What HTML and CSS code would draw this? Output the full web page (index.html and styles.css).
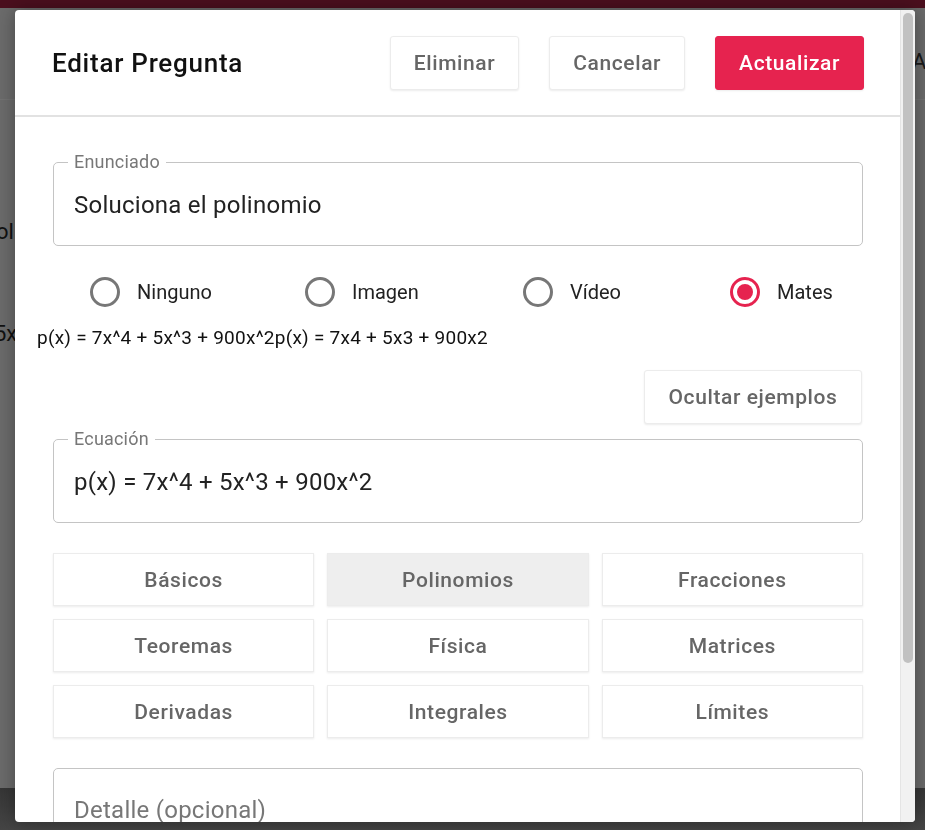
FILE: index.html
```html
<!DOCTYPE html>
<html lang="es">
<head>
    <meta charset="UTF-8">
    <meta name="viewport" content="width=device-width, initial-scale=1.0">
    <title>Editar Pregunta</title>
    <link rel="stylesheet" href="styles.css">
</head>
<body>
    <div class="page">
        <div class="page-top"></div>
        <div class="page-bar">Actualizar</div>
        <p class="page-line first">olinomio</p>
        <p class="page-line second">5x^3 + 900x^2</p>
        <div class="page-footer"></div>
    </div>

    <div class="modal">
        <div class="modal-content">
            <header class="modal-header">
                <h1>Editar Pregunta</h1>
                <div class="actions">
                    <button class="btn">Eliminar</button>
                    <button class="btn">Cancelar</button>
                    <button class="btn primary">Actualizar</button>
                </div>
            </header>

            <div class="modal-body">
                <fieldset class="field">
                    <legend>Enunciado</legend>
                    <div class="field-value">Soluciona el polinomio</div>
                </fieldset>

                <div class="media-options">
                    <label class="radio"><span class="radio-circle"></span>Ninguno</label>
                    <label class="radio"><span class="radio-circle"></span>Imagen</label>
                    <label class="radio"><span class="radio-circle"></span>Vídeo</label>
                    <label class="radio"><span class="radio-circle checked"></span>Mates</label>
                </div>

                <p class="preview">p(x) = 7x^4 + 5x^3 + 900x^2p(x) = 7x4 + 5x3 + 900x2</p>

                <div class="examples-row">
                    <button class="btn">Ocultar ejemplos</button>
                </div>

                <fieldset class="field">
                    <legend>Ecuación</legend>
                    <div class="field-value">p(x) = 7x^4 + 5x^3 + 900x^2</div>
                </fieldset>

                <div class="categories">
                    <button class="btn cat">Básicos</button>
                    <button class="btn cat active">Polinomios</button>
                    <button class="btn cat">Fracciones</button>
                    <button class="btn cat">Teoremas</button>
                    <button class="btn cat">Física</button>
                    <button class="btn cat">Matrices</button>
                    <button class="btn cat">Derivadas</button>
                    <button class="btn cat">Integrales</button>
                    <button class="btn cat">Límites</button>
                </div>

                <fieldset class="field detail">
                    <div class="field-value placeholder">Detalle (opcional)</div>
                </fieldset>
            </div>
        </div>
        <div class="scrollbar"><div class="scrollbar-thumb"></div></div>
    </div>
</body>
</html>
```

FILE: styles.css
```css
* {
    box-sizing: border-box;
}

body {
    margin: 0;
    font-family: Roboto, "Liberation Sans", Arial, sans-serif;
    background: #6b6b6b;
    height: 100vh;
    overflow: hidden;
}

/* page behind the dialog (already darkened) */
.page {
    height: 100vh;
    display: flex;
    flex-direction: column;
    color: #111;
}

.page-top {
    height: 8px;
    background: #4b0f1e;
}

.page-bar {
    height: 92px;
    padding-left: 912px;
    padding-top: 41px;
    font-size: 22px;
    color: #1a1a1a;
    white-space: nowrap;
    overflow: hidden;
    border-bottom: 1px solid #727272;
}

.page-line {
    margin: 0 0 0 -4px;
    font-size: 22px;
    white-space: nowrap;
    overflow: hidden;
}

.page-line.first {
    margin-top: 119px;
}

.page-line.second {
    margin-top: 77px;
    margin-left: -6px;
}

.page-footer {
    margin-top: auto;
    height: 42px;
    background: linear-gradient(#363636, #454545);
}

/* dialog */
.modal {
    position: fixed;
    top: 10px;
    left: 15px;
    width: 900px;
    height: 812px;
    display: flex;
    background: #fff;
    border-radius: 4px;
    overflow: hidden;
    box-shadow: 0 0 18px rgba(0, 0, 0, 0.35);
}

.modal-content {
    flex: 1;
    overflow: hidden;
}

.scrollbar {
    width: 15px;
    padding: 3px 2px 0 2px;
    background: #f1f1f1;
    border-left: 1px solid #e4e4e4;
}

.scrollbar-thumb {
    height: 650px;
    background: #c1c1c1;
    border-radius: 5px;
}

.modal-header {
    display: flex;
    align-items: center;
    height: 107px;
    padding: 0 36px 0 37px;
    border-bottom: 2px solid #e2e2e2;
}

.modal-header h1 {
    margin: 0;
    font-size: 26px;
    font-weight: 500;
    color: #111;
    letter-spacing: 0.75px;
}

.actions {
    margin-left: auto;
    display: flex;
    gap: 30px;
}

.btn {
    height: 54px;
    padding: 0 23px;
    background: #fff;
    border: 1px solid #ececec;
    border-radius: 3px;
    box-shadow: 0 1px 2px rgba(0, 0, 0, 0.08);
    font-family: inherit;
    font-size: 21px;
    font-weight: 500;
    letter-spacing: 0.6px;
    color: #666;
    cursor: pointer;
}

.btn.primary {
    background: #e6234f;
    border-color: #e6234f;
    color: #fff;
    padding: 0 23px;
}

.modal-body {
    padding: 35px 37px 120px 38px;
}

.field {
    margin: 0;
    padding: 0 20px;
    border: 1px solid #c4c4c4;
    border-radius: 5px;
}

.field legend {
    margin-left: -6px;
    padding: 0 6px;
    font-size: 18px;
    line-height: 20px;
    letter-spacing: 0.2px;
    color: #777;
}

.field-value {
    font-size: 24px;
    line-height: 26px;
    letter-spacing: 0.25px;
    color: #222;
    padding: 20px 0 27px;
}

.field.detail {
    height: 140px;
    margin-top: 30px;
}

.field-value.placeholder {
    color: #777;
    padding-top: 28px;
}

.media-options {
    display: grid;
    grid-template-columns: 215px 218px 207px auto;
    padding-left: 37px;
    margin-top: 31px;
}

.radio {
    display: flex;
    align-items: center;
    gap: 17px;
    font-size: 20px;
    color: #222;
}

.radio-circle {
    width: 30px;
    height: 30px;
    border: 3px solid #777;
    border-radius: 50%;
    display: flex;
    align-items: center;
    justify-content: center;
}

.radio-circle.checked {
    border-color: #e6234f;
}

.radio-circle.checked::after {
    content: '';
    width: 16px;
    height: 16px;
    border-radius: 50%;
    background: #e6234f;
}

.preview {
    margin: 21px 0 0 -16px;
    font-size: 19px;
    line-height: 20px;
    letter-spacing: 0.25px;
    color: #111;
}

.examples-row {
    display: flex;
    justify-content: flex-end;
    margin-top: 22px;
    margin-bottom: 5px;
}

.examples-row .btn {
    width: 218px;
    margin-right: 1px;
}

.categories {
    display: grid;
    grid-template-columns: repeat(3, 1fr);
    gap: 13px;
    margin-top: 30px;
}

.btn.cat {
    height: 53px;
    border-radius: 0;
}

.btn.cat.active {
    background: #eee;
}
```
